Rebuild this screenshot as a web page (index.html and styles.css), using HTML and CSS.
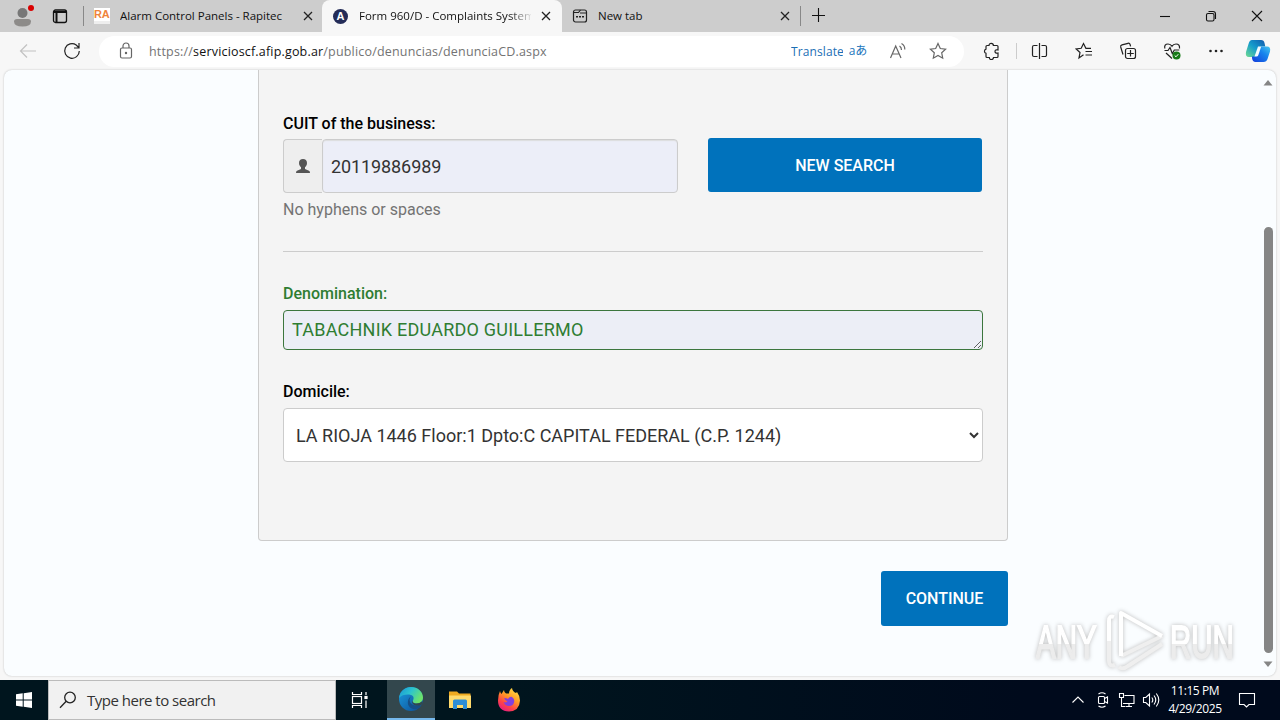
FILE: index.html
```html
<!DOCTYPE html>
<html lang="en">
<head>
    <meta charset="UTF-8">
    <meta name="viewport" content="width=device-width, initial-scale=1.0">
    <title>Form 960/D - Complaints System</title>
    <link rel="stylesheet" href="styles.css">
</head>
<body>
    <div class="tabbar">
        <div class="profile">
            <svg width="24" height="24" viewBox="0 0 24 24"><circle cx="11.500" cy="9" r="5" fill="#777"/><path d="M3 17.500Q3 15 6 15h11q3 0 3 2.500 0 5-8.500 5T3 17.500z" fill="#8d8b89"/><circle cx="20" cy="4" r="3" fill="#d90000"/></svg>
        </div>
        <div class="workspaces">
            <svg width="16" height="16" viewBox="0 0 16 16" fill="none" stroke="#111" stroke-width="1.300"><rect x="1.500" y="2" width="13" height="12.500" rx="2"/><path d="M1.500 4h13M4.500 4v10" stroke-width="2"/></svg>
        </div>
        <div class="tab tab-first">
            <span class="fav-ra">RA</span>
            <span class="tab-title title-alarm">Alarm Control Panels - Rapitec</span>
            <svg class="tab-close" width="10" height="10" viewBox="0 0 10 10"><path d="M1 1l8 8M9 1L1 9"/></svg>
        </div>
        <div class="tab tab-active">
            <span class="fav-a">A</span>
            <span class="tab-title title-form">Form 960/D - Complaints System</span>
            <svg class="tab-close" width="10" height="10" viewBox="0 0 10 10"><path d="M1 1l8 8M9 1L1 9"/></svg>
        </div>
        <div class="tab tab-new">
            <svg class="fav" width="16" height="16" viewBox="0 0 16 16" fill="none" stroke="#222" stroke-width="1.200"><rect x="1.500" y="2" width="13" height="12" rx="2"/><path d="M1.500 4.500h5l2-2.500M8 5h6.500"/><path d="M4 8.700h2M7 8.700h2M10 8.700h2" stroke-width="1.600"/></svg>
            <span class="tab-title">New tab</span>
            <svg class="tab-close" width="10" height="10" viewBox="0 0 10 10"><path d="M1 1l8 8M9 1L1 9"/></svg>
        </div>
        <div class="add-tab">
            <svg width="14" height="14" viewBox="0 0 14 14"><path d="M6.500 0v14M0 7.500h13" stroke="#111" stroke-width="1.100"/></svg>
        </div>
        <div class="window-buttons">
            <span><svg width="12" height="12" viewBox="0 0 12 12"><path d="M1 6.500h10"/></svg></span>
            <span><svg width="12" height="12" viewBox="0 0 12 12"><rect x="1.500" y="3.500" width="7.500" height="7.500" rx="1.500"/><path d="M3.500 1.500H8q2.500 0 2.500 2.500v5"/></svg></span>
            <span><svg width="12" height="12" viewBox="0 0 12 12"><path d="M1 1l10 10M11 1L1 11"/></svg></span>
        </div>
    </div>

    <div class="toolbar">
        <div class="tool back"><svg width="18" height="16" viewBox="0 0 18 16"><path d="M17 8H1.500M8 1.500L1.500 8 8 14.500"/></svg></div>
        <div class="tool"><svg width="18" height="18" viewBox="0 0 18 18" stroke-width="1.500"><path d="M16.300 9A7.300 7.300 0 1 1 13.200 3L15.700 5.500M16 1v5h-5"/></svg></div>
        <div class="address">
            <div class="tool-small lock"><svg width="14" height="18" viewBox="0 0 14 18"><rect x="1.500" y="6" width="11" height="10" rx="1.500"/><path d="M4 6V4a3 3 0 0 1 6 0v2"/><circle cx="7" cy="11" r=".6" fill="#666"/></svg></div>
            <div class="url">https://<b>servicioscf.afip.gob.ar</b>/publico/denuncias/denunciaCD.aspx</div>
            <div class="translate">Translate</div>
            <div class="tool-small lang">aあ</div>
            <div class="tool-small"><svg width="18" height="18" viewBox="0 0 18 18"><path d="M1.500 16L6.700 4 12 16M3.300 12h6.800M10.500 4q2 1.300 2 4M12.500 1.500q3.500 2 3.300 6"/></svg></div>
            <div class="tool-small"><svg width="18" height="18" viewBox="0 0 18 18"><path d="M9 1.500l2.300 5 5.300.6-3.900 3.700 1 5.400L9 13.500l-4.700 2.700 1-5.400L1.400 7.100l5.300-.6z"/></svg></div>
        </div>
        <div class="tool puzzle"><svg width="18" height="18" viewBox="0 0 18 18"><path d="M6 3.500a2.200 2.200 0 0 1 4.400 0H14a1 1 0 0 1 1 1V8q-3-.7-3 1.400T15 11v3.500a1 1 0 0 1-1 1h-3.500a2.100 2.100 0 0 1-4.200 0H4a1 1 0 0 1-1-1V11.300a2.200 2.200 0 0 1 0-4.200V4.500a1 1 0 0 1 1-1z"/></svg></div>
        <div class="tool-line"></div>
        <div class="tool"><svg width="18" height="18" viewBox="0 0 18 18"><path d="M8.500 1v16M6.500 3.500H3A1.500 1.500 0 0 0 1.500 5v8A1.500 1.500 0 0 0 3 14.500h3.500M10.500 3.500H14A1.500 1.500 0 0 1 15.500 5v8a1.500 1.500 0 0 1-1.500 1.500h-3.500"/></svg></div>
        <div class="tool"><svg width="18" height="18" viewBox="0 0 18 18"><path d="M8.500 12.700L4 16l1-5.500L1.200 7l5-.7L8.500 1.500l2.400 4.800H16M10.500 9.500H17M10.500 13H17"/></svg></div>
        <div class="tool"><svg width="18" height="18" viewBox="0 0 18 18"><path d="M4 12.500L1.700 5q-.4-1.700 1.300-2.200L9 1.300q1.500-.4 2 1l.6 2M11.500 8v6.500M8.200 11.500h6.600"/><rect x="6.500" y="6.500" width="10" height="10" rx="2"/></svg></div>
        <div class="tool"><svg width="18" height="18" viewBox="0 0 18 18"><path d="M1.800 6.500Q1 2 5 2q2.700 0 4 2.300Q10.300 2 13 2q4 0 3.500 4.500M1.500 8.500H5l2-3 2.300 6L11.300 8h5M3 11l6 5.500"/><circle cx="13.500" cy="13.500" r="4" fill="#177a17" stroke="none"/><path d="M11.700 13.500l1.300 1.300 2.300-2.600" stroke="#fff" stroke-width="1"/></svg></div>
        <div class="tool"><svg width="18" height="18" viewBox="0 0 18 18" class="dots"><circle cx="3.500" cy="9" r="1.300"/><circle cx="9" cy="9" r="1.300"/><circle cx="14.500" cy="9" r="1.300"/></svg></div>
        <div class="copilot">
            <svg width="26" height="24" viewBox="0 0 26 24">
                <defs>
                    <linearGradient id="cpA" x1="0" y1="1" x2="1" y2="0"><stop offset="0" stop-color="#70dc91"/><stop offset=".5" stop-color="#159ccc"/><stop offset="1" stop-color="#1158ad"/></linearGradient>
                    <linearGradient id="cpB" x1="0" y1="1" x2="1" y2="0"><stop offset="0" stop-color="#143cdb"/><stop offset=".6" stop-color="#1685ed"/><stop offset="1" stop-color="#48c8ee"/></linearGradient>
                </defs>
                <path d="M7 1h9q3 0 3.500 3l.8 3.500h-3q-3 0-4 4l-1.500 4.500q-.5 2-3 2H4q-4 0-3-5L3.500 5Q4.500 1 7 1z" fill="url(#cpA)"/>
                <path d="M17 7.500h5q4 0 3 5l-2.500 7.500q-1 3-4 3h-8q-3 0-3.500-4v-1.500h2q2 0 3-3l2-4q1-3 3-3z" fill="url(#cpB)"/>
                <path d="M13 7.500h3.200l-2.800 8.500q-.5 1.500-2 1.500H9.500z" fill="#f2fbff"/>
            </svg>
        </div>
    </div>

    <div class="viewport">
        <div class="page">
            <div class="panel">
                <label for="cuit">CUIT of the business:</label>
                <div class="cuit-row">
                    <div class="input-group">
                        <span class="addon"><svg width="16" height="16" viewBox="0 0 16 16"><path d="M8 1c2.500 0 4 1.500 4 4 0 2-1 3.500-2 4.300V11l4 1.700q1 .5 1 2.300H1q0-1.800 1-2.300L6 11V9.300C5 8.500 4 7 4 5c0-2.500 1.500-4 4-4z" fill="#555"/></svg></span>
                        <input type="text" id="cuit" value="20119886989">
                    </div>
                    <button class="btn btn-search">NEW SEARCH</button>
                </div>
                <p class="help">No hyphens or spaces</p>
                <hr>
                <label for="denomination" class="success">Denomination:</label>
                <textarea id="denomination" rows="1">TABACHNIK EDUARDO GUILLERMO</textarea>
                <label for="domicile" class="label-domicile">Domicile:</label>
                <select id="domicile">
                    <option>LA RIOJA 1446 Floor:1 Dpto:C CAPITAL FEDERAL (C.P. 1244)</option>
                </select>
            </div>
            <div class="actions">
                <button class="btn btn-continue">CONTINUE</button>
            </div>
        </div>
        <div class="scrollbar">
            <svg width="10" height="6" viewBox="0 0 10 6"><path d="M5 0l4.500 5.500h-9z" fill="#858585"/></svg>
            <div class="thumb"></div>
            <svg width="10" height="6" viewBox="0 0 10 6"><path d="M5 6L.5.500h9z" fill="#858585"/></svg>
        </div>
        <div class="watermark">
            <span>ANY</span>
            <svg width="62" height="66" viewBox="0 0 62 66" fill="none" stroke="#fff" stroke-width="4" stroke-linejoin="round"><path d="M17 48l41-20" stroke="#efefef"/><path d="M58 28L17 5v43"/><path d="M10 9q-5-2-5 4v20"/><path d="M5 33v20q0 6 6 4M15 59q4 3 9-1l34-22" stroke="#efefef"/></svg>
            <span>RUN</span>
        </div>
    </div>

    <div class="taskbar">
        <div class="start"><svg width="16" height="16" viewBox="0 0 16 16" fill="#fff"><path d="M0 2.300l6.700-1v6.200H0zM7.700 1.200L16 0v7.500H7.700zM0 8.500h6.700v6.200l-6.700-1zM7.700 8.500H16V16l-8.300-1.200z"/></svg></div>
        <div class="search">
            <svg width="18" height="18" viewBox="0 0 18 18" fill="none" stroke="#222" stroke-width="1.300"><circle cx="11" cy="6.500" r="5.300"/><path d="M7.200 10.300L1 16.700"/></svg>
            <span>Type here to search</span>
        </div>
        <div class="task task-view"><svg width="18" height="18" viewBox="0 0 18 18" fill="none" stroke="#fff" stroke-width="1.200"><rect x="1.500" y="5.500" width="9" height="7"/><path d="M1.500 1v2.500h9V1M1.500 17v-2.500h9V17M15 1v3M15 9.500V17"/><rect x="14" y="5.500" width="2" height="2" fill="#fff"/></svg></div>
        <div class="task task-active">
            <svg width="24" height="24" viewBox="0 0 24 24">
                <defs>
                    <linearGradient id="edgeTop" x1="0" y1="0" x2="1" y2=".5"><stop offset="0" stop-color="#1893d5"/><stop offset=".5" stop-color="#2cc3cf"/><stop offset="1" stop-color="#6de36b"/></linearGradient>
                    <linearGradient id="edgeLow" x1="0" y1="0" x2="1" y2="1"><stop offset="0" stop-color="#1b9de0"/><stop offset="1" stop-color="#0c4b94"/></linearGradient>
                </defs>
                <circle cx="12" cy="12" r="12" fill="url(#edgeLow)"/>
                <path d="M0 11C1 4 6 0 12 0c7 0 12 5 12 10.500 0 4-3 6-6.500 6-3 0-4.500-1.500-3.500-3 2-4-1-6-5-6-4 0-7 1-9 3.500z" fill="url(#edgeTop)"/>
                <path d="M12 9.500c-3 3-1 9 5 9 2.500 0 4-.7 5.500-1.500-1 2-2.500 4-4.500 5-6 1-10-3-9-8 .4-2 1.500-3.600 3-4.500z" fill="#164f86"/>
                <path d="M14 13.500c-1 1.500.5 3 3.500 3 2 0 4-.7 5.300-2l.7 2c-1 1.500-3 2.200-6 2-4-.3-5.500-4-3.500-5z" fill="#33474d"/>
            </svg>
        </div>
        <div class="task"><svg width="22" height="20" viewBox="0 0 22 20"><path d="M0 1.500h8l2 2h11.500V18H0z" fill="#efaa20"/><path d="M0 5.500h22V18H0z" fill="#ffda6c"/><path d="M4 11q0-1.500 1.500-1.500h11Q18 9.500 18 11v8h-4v-4H8v4H4z" fill="#2c8dd6"/></svg></div>
        <div class="task"><svg width="24" height="24" viewBox="0 0 24 24">
            <defs><linearGradient id="fox" x1=".8" y1="0" x2=".2" y2="1"><stop offset="0" stop-color="#ffe14a"/><stop offset=".4" stop-color="#ff9c25"/><stop offset=".7" stop-color="#ff4545"/><stop offset="1" stop-color="#e21888"/></linearGradient></defs>
            <path d="M3 3q.4 2 1.500 3L7 2q0 2.500 2 3.500h3Q12 2 15 0q.5 3.500 4 5l1-1q3 4 3 8.500Q22.500 23 12 23.500 1 23 1 12.500 1 7 3 3z" fill="url(#fox)"/>
            <path d="M7 10q3 0 4 1 2-3 4-2 3 2 2 5.500t-5 3.500q-4 0-5.500-4 2 1 4-.5Q8 12.500 7 10z" fill="#8140df"/></svg></div>
        <div class="tray">
            <svg width="14" height="16" viewBox="0 0 14 16"><path d="M1.500 10.500L7 5l5.500 5.500"/></svg>
            <svg class="camera" width="14" height="18" viewBox="0 0 14 18"><rect x="2.500" y="5.500" width="6" height="7" rx="1"/><path d="M8.500 7.500l3-1.500v6l-3-1.500M2.500 3Q6 .5 9.500 3M2.500 15q3.500 2.500 7 0"/></svg>
            <svg class="network" width="18" height="16" viewBox="0 0 18 16"><path d="M6.500 3.500H16v8H5M11 11.500V14M7.500 14.500H14M1.500 1.500h4v4h-4zM3.500 5.500v9H7"/></svg>
            <svg class="volume" width="18" height="16" viewBox="0 0 18 16"><path d="M1.500 5.500h2.300L7.500 2v12l-3.700-3.500H1.500zM9.800 5.500q2 2.500 0 5M12 3.500q3.500 4.500 0 9M14.300 1.500q5 6.500 0 13"/></svg>
            <div class="clock"><div class="time">11:15 PM</div><div>4/29/2025</div></div>
            <svg class="notice" width="18" height="18" viewBox="0 0 18 18"><path d="M1.500 2.500h15v11H11L8.500 16 6 13.500H1.500z"/></svg>
        </div>
    </div>
</body>
</html>
```
FILE: styles.css
```css
* {
    box-sizing: border-box;
}
body {
    width: 1280px;
    height: 720px;
    margin: 0;
    overflow: hidden;
    display: flex;
    flex-direction: column;
    background: #f7f7f7;
    font-family: "Open Sans", "Noto Sans CJK JP", sans-serif;
    font-size: 12px;
}
svg {
    display: block;
    flex-shrink: 0;
}

/* tabs */
.tabbar {
    display: flex;
    flex-shrink: 0;
    height: 32px;
    background: #cdcdcd;
    color: #111;
}
.profile {
    width: 44px;
    padding: 4px 0 0 11px;
}
.workspaces {
    width: 40px;
    height: 20px;
    margin-top: 6px;
    padding: 2px 0 0 8px;
    border-right: 1px solid #888;
}
.tab {
    display: flex;
    align-items: center;
    width: 240px;
    padding: 0 11px;
}
.tab-first {
    width: 238px;
    padding: 0 9px 0 10px;
}
.tab-active {
    background: #f7f7f7;
    border-radius: 8px 8px 0 0;
}
.tab-new {
    padding: 0 12px 0 10px;
}
.tab-title {
    flex: 1;
    margin: -1px 4px 0 10px;
    overflow: hidden;
    white-space: nowrap;
    font-size: 11.5px;
}
.title-form {
    flex: 0 0 172px;
    margin-left: 11px;
    margin-right: 11px;
    -webkit-mask-image: linear-gradient(to right, #000 150px, transparent 174px);
}
.tab-close {
    stroke: #222;
    stroke-width: 1.3;
}
.tab-active .tab-close {
    margin-left: -1px;
}
.fav-ra {
    width: 16px;
    height: 16px;
    background: #fff;
    color: #ef843b;
    font: bold 11px/12px "Liberation Sans", sans-serif;
    letter-spacing: -0.3px;
    border-bottom: 3px solid #eee;
}
.fav-a {
    width: 15px;
    height: 15px;
    border-radius: 50%;
    background: #242c58;
    color: #fff;
    text-align: center;
    font: bold 11px/15px "Liberation Sans", sans-serif;
}
.add-tab {
    width: 36px;
    height: 20px;
    margin-top: 6px;
    margin-left: -2px;
    padding: 2px 0 0 11px;
    border-left: 1px solid #888;
}
.window-buttons {
    display: flex;
    margin-left: auto;
}
.window-buttons span {
    display: flex;
    align-items: center;
    justify-content: center;
    width: 46px;
}
.window-buttons svg {
    fill: none;
    stroke: #111;
    stroke-width: 1.1;
}

/* address bar */
.toolbar {
    display: flex;
    flex-shrink: 0;
    align-items: center;
    height: 38px;
    padding-left: 6px;
}
.tool {
    display: flex;
    align-items: center;
    justify-content: center;
    width: 44px;
}
.tool svg, .tool-small svg {
    fill: none;
    stroke: #222;
    stroke-width: 1.2;
}
.tool .dots {
    fill: #222;
    stroke: none;
}
.back svg {
    stroke: #c2c2c2;
}
.address {
    display: flex;
    align-items: center;
    width: 865px;
    height: 31px;
    margin-left: 5px;
    padding: 0 6px;
    background: #fff;
    border-radius: 16px;
}
.tool-small {
    display: flex;
    align-items: center;
    justify-content: center;
    width: 40px;
}
.tool-small svg {
    stroke: #666;
}
.lock {
    width: 42px;
}
.url {
    flex: 1;
    padding-left: 2px;
    color: #737373;
    font-size: 12.5px;
    letter-spacing: 0.18px;
    white-space: nowrap;
}
.url b {
    color: #111;
    font-weight: normal;
}
.translate {
    width: 52px;
    margin-right: -5px;
    overflow: hidden;
    color: #1b6fb5;
    font-size: 12px;
    letter-spacing: 0.1px;
    white-space: nowrap;
}
.lang {
    color: #1b75bc;
    font-size: 12px;
    line-height: 16px;
}
.puzzle {
    margin-left: 6px;
}
.tool-line {
    width: 1px;
    height: 16px;
    margin: 0 1px 0 2px;
    background: #ccc;
}
.copilot {
    padding-left: 7px;
}

/* web page */
.viewport {
    position: relative;
    display: flex;
    flex-shrink: 0;
    width: 1272px;
    height: 606px;
    margin: 0 0 4px 4px;
    background: #fafdff;
    border-radius: 8px;
    box-shadow: 0 0 2px #bbb;
    overflow: hidden;
    font-family: Roboto, sans-serif;
}
.page {
    width: 750px;
    margin-left: 254px;
}
.panel {
    height: 471px;
    padding: 44px 24px 0;
    background: #f4f4f4;
    border: 1px solid #ccc;
    border-top: none;
    border-radius: 0 0 4px 4px;
}
label {
    display: block;
    height: 20px;
    color: #000;
    font-size: 16px;
    font-weight: 500;
    line-height: 20px;
}
.cuit-row {
    display: flex;
    gap: 30px;
    margin-top: 4px;
}
.input-group {
    display: flex;
    width: 395px;
    height: 54px;
    margin-top: 1px;
}
.addon {
    display: flex;
    align-items: center;
    justify-content: center;
    width: 39px;
    background: #eee;
    border: 1px solid #ccc;
    border-right: none;
    border-radius: 4px 0 0 4px;
}
input, textarea, select {
    margin: 0;
    border: 1px solid #ccc;
    border-radius: 4px;
    color: #333;
    font-family: Roboto, sans-serif;
    font-size: 18px;
}
input {
    width: 356px;
    padding: 1px 8px 0;
    background: #eceef8;
    box-shadow: inset 0 1px 1px #ddd;
    letter-spacing: -0.1px;
}
.btn {
    padding: 0;
    border: none;
    border-radius: 3px;
    background: #0072bc;
    color: #fff;
    font-family: Roboto, sans-serif;
    font-size: 16px;
    font-weight: 500;
}
.btn-search {
    width: 274px;
    height: 54px;
}
.help {
    margin: 7px 0 0;
    color: #737373;
    font-size: 16px;
    line-height: 20px;
}
hr {
    margin: 31px 0 32px;
    border: none;
    border-top: 1px solid #ccc;
}
.success {
    color: #2f7d32;
}
textarea {
    display: block;
    width: 700px;
    height: 40px;
    margin-top: 6px;
    padding: 6px 8px;
    overflow: hidden;
    background: #eceef6;
    border-color: #3c763d;
    color: #2f7d32;
    line-height: 26px;
    letter-spacing: 0.23px;
}
.label-domicile {
    margin-top: 32px;
}
select {
    display: block;
    width: 700px;
    height: 54px;
    margin-top: 6px;
    padding: 1px 0 0 8px;
    background: #fff;
}
.actions {
    display: flex;
    justify-content: flex-end;
    margin-top: 30px;
}
.btn-continue {
    width: 127px;
    height: 55px;
}
.scrollbar {
    display: flex;
    flex-direction: column;
    align-items: center;
    width: 10px;
    margin-left: auto;
    margin-right: 3px;
    padding-top: 10px;
}
.thumb {
    width: 9px;
    height: 426px;
    margin: 141px 0 8px;
    background: #858585;
    border-radius: 5px;
}

/* logo laid over the page */
.watermark {
    position: absolute;
    right: 42px;
    bottom: 2px;
    display: flex;
    align-items: center;
    gap: 4px;
    color: transparent;
    font: 46px/60px "Liberation Sans", sans-serif;
    filter: drop-shadow(0 0 2px #bbb);
}
.watermark span {
    width: 100px;
    margin-right: -36px;
    padding-top: 2px;
    background: linear-gradient(to bottom, #fff 55%, #ececec 55%);
    -webkit-background-clip: text;
    -webkit-text-stroke: 2px transparent;
    transform: scaleX(0.64);
    transform-origin: left;
    white-space: nowrap;
}

/* taskbar */
.taskbar {
    display: flex;
    flex-shrink: 0;
    height: 40px;
    background: linear-gradient(to right, #00151e 0, #00151e 40%, #000a1c 80%);
    color: #fff;
}
.start, .task {
    display: flex;
    align-items: center;
    justify-content: center;
    width: 48px;
}
.search {
    display: flex;
    align-items: center;
    width: 288px;
    padding-left: 10px;
    background: #f1f1f1;
    border: 1px solid #bbb;
    color: #333;
    font-size: 15px;
}
.search span {
    margin-left: 10px;
    letter-spacing: -0.5px;
}
.task-view {
    width: 51px;
    padding-right: 3px;
}
.task-active {
    background: #33474d;
    border-bottom: 2px solid #76b9ed;
}
.task-active + .task {
    width: 50px;
}
.tray {
    display: flex;
    align-items: center;
    margin-left: auto;
    padding-right: 24px;
}
.tray svg {
    fill: none;
    stroke: #fff;
    stroke-width: 1.1;
}
.tray .camera {
    margin-left: 11px;
}
.tray .network {
    margin-left: 8px;
}
.tray .volume {
    margin-left: 6px;
}
.clock {
    width: 60px;
    margin: 0 13px 0 5px;
    text-align: center;
    font-size: 12px;
    line-height: 18px;
    letter-spacing: -0.4px;
    white-space: nowrap;
}
```
